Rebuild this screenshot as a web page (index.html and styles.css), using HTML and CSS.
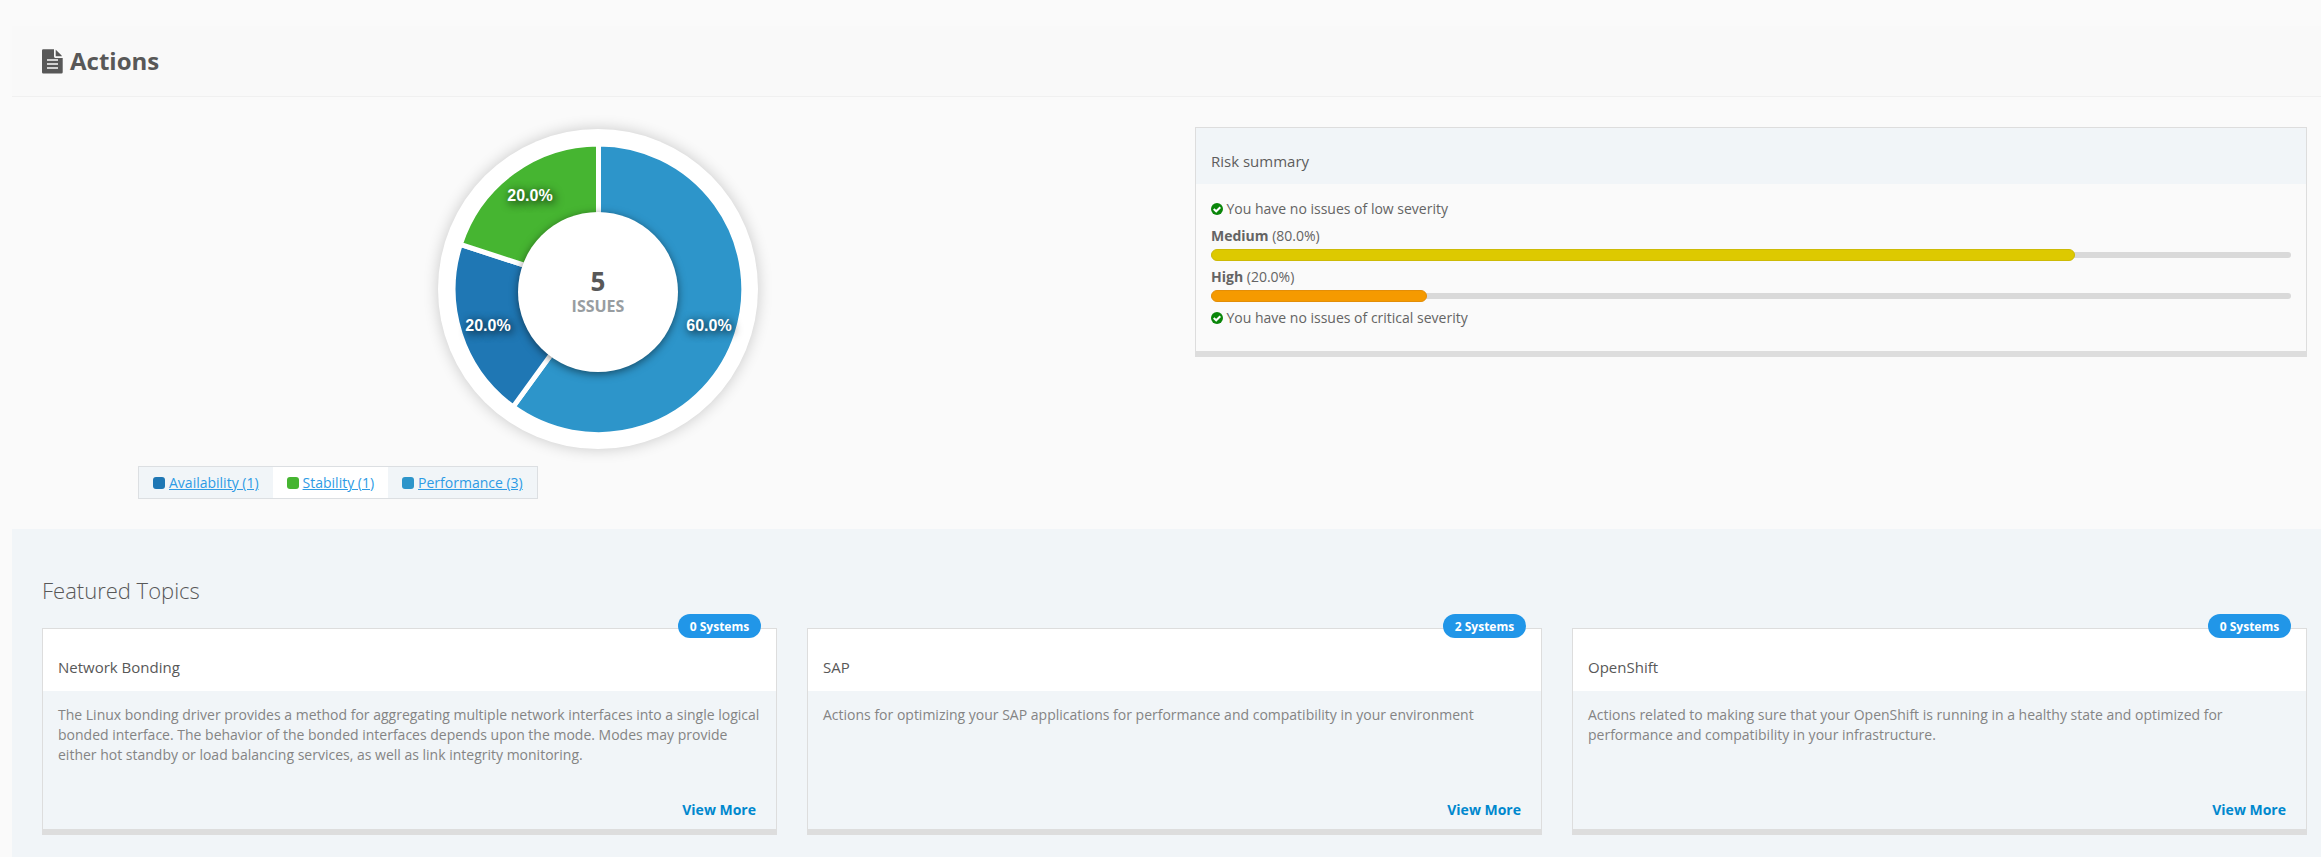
FILE: index.html
```html
<!DOCTYPE html>
<html lang="en">
<head>
<meta charset="utf-8">
<title>Actions</title>
<link rel="stylesheet" href="styles.css">
</head>
<body>
<div class="page">
  <header class="page-header">
    <svg class="page-icon" viewBox="0 0 21 25" width="21" height="25"><path d="M1.3 0.3H12V7.6a1.3 1.3 0 0 0 1.3 1.3H20.7V23.2a1.3 1.3 0 0 1-1.3 1.3H1.3A1.3 1.3 0 0 1 0 23.200V1.600A1.300 1.300 0 0 1 1.300 .3ZM13.700 .8a2 2 0 0 1 .6.400L19.400 6.300a2 2 0 0 1 .5.900H13.700Z"/><path class="page-icon-lines" d="M5 11H16M5 15H16M5 19H16"/></svg>
    <h1 class="page-title">Actions</h1>
  </header>

  <section class="overview">
    <div class="chart-col">
      <svg class="donut" viewBox="0 0 320 320" width="320" height="320">
        <g class="slices">
          <path fill="#2d95ca" d="M160.500 160.300V15A145.300 145.300 0 1 1 75.100 277.850Z"/>
          <path fill="#1f77b4" d="M160.500 160.300L75.100 277.850A145.300 145.300 0 0 1 22.300 115.400Z"/>
          <path fill="#46b531" d="M160.500 160.300L22.300 115.400A145.300 145.300 0 0 1 160.500 15Z"/>
        </g>
        <circle class="hole" cx="160" cy="163" r="80"/>
        <text class="slice-label" x="92" y="72">20.0%</text>
        <text class="slice-label" x="50" y="202">20.0%</text>
        <text class="slice-label" x="271" y="202">60.0%</text>
        <text class="total" x="160" y="162">5</text>
        <text class="total-label" x="160" y="183">ISSUES</text>
      </svg>
      <div class="legend">
        <span class="legend-item"><i class="swatch availability"></i><a href="#">Availability (1)</a></span>
        <span class="legend-item"><i class="swatch stability"></i><a href="#">Stability (1)</a></span>
        <span class="legend-item"><i class="swatch performance"></i><a href="#">Performance (3)</a></span>
      </div>
    </div>

    <div class="risk">
      <h2 class="risk-title">Risk summary</h2>
      <div class="risk-body">
        <div class="risk-clear"><svg class="check" viewBox="0 0 12 12" width="12" height="12"><circle cx="6" cy="6" r="6"/><path d="M2.700 6L5.200 8.300L9.300 4.200"/></svg>You have no issues of low severity</div>
        <div class="risk-row">
          <div><b>Medium</b> (80.0%)</div>
          <div class="bar"><div class="fill medium" style="width:80%"></div></div>
        </div>
        <div class="risk-row">
          <div><b>High</b> (20.0%)</div>
          <div class="bar"><div class="fill high" style="width:20%"></div></div>
        </div>
        <div class="risk-clear"><svg class="check" viewBox="0 0 12 12" width="12" height="12"><circle cx="6" cy="6" r="6"/><path d="M2.700 6L5.200 8.300L9.300 4.200"/></svg>You have no issues of critical severity</div>
      </div>
    </div>
  </section>

  <section class="topics">
    <h2 class="topics-title">Featured Topics</h2>
    <div class="cards">
      <article class="card">
        <span class="badge">0 Systems</span>
        <h3 class="card-title">Network Bonding</h3>
        <p class="card-text">The Linux bonding driver provides a method for aggregating multiple network interfaces into a single logical bonded interface. The behavior of the bonded interfaces depends upon the mode. Modes may provide either hot standby or load balancing services, as well as link integrity monitoring.</p>
        <a class="more" href="#">View More</a>
      </article>
      <article class="card">
        <span class="badge">2 Systems</span>
        <h3 class="card-title">SAP</h3>
        <p class="card-text">Actions for optimizing your SAP applications for performance and compatibility in your environment</p>
        <a class="more" href="#">View More</a>
      </article>
      <article class="card">
        <span class="badge">0 Systems</span>
        <h3 class="card-title">OpenShift</h3>
        <p class="card-text">Actions related to making sure that your OpenShift is running in a healthy state and optimized for performance and compatibility in your infrastructure.</p>
        <a class="more" href="#">View More</a>
      </article>
    </div>
  </section>
</div>
</body>
</html>
```

FILE: styles.css
```css
* { box-sizing: border-box; }
body {
  margin: 0;
  height: 857px;
  overflow: hidden;
  background: #fafafa;
  color: #646464;
  font: 14px/20px "Open Sans", sans-serif;
}
h1, h2, h3, p { margin: 0; }
.page { padding: 26px 0 0 12px; }

.page-header {
  display: flex;
  align-items: center;
  gap: 7px;
  height: 71px;
  padding: 0 30px;
  background: #f9f9f9;
  border-bottom: 1px solid #f0f0f0;
}
.page-icon { fill: #585858; }
.page-icon-lines { stroke: #f9f9f9; stroke-width: 1.7; fill: none; }
.page-title { font-size: 24px; line-height: 34px; font-weight: 700; color: #585858; }

.overview {
  display: grid;
  grid-template-columns: 1fr 1fr;
  gap: 41px;
  height: 432px;
  padding: 30px 14px 0 30px;
}
.chart-col {
  display: flex;
  flex-direction: column;
  align-items: flex-start;
  padding-top: 2px;
}
.donut {
  display: block;
  align-self: center;
  flex: none;
  border-radius: 50%;
  background: #fff;
  box-shadow: 0 0 15px rgba(0, 0, 0, .2);
}
.slices path { stroke: #fff; stroke-width: 5; }
.hole { fill: #fff; filter: drop-shadow(0 2px 4px rgba(0, 0, 0, .5)); }
.slice-label {
  font: 700 16px "Liberation Sans", Arial, sans-serif;
  fill: #fff;
  text-anchor: middle;
  text-shadow: 2px 2px 10px #000;
}
.total { font-size: 26px; font-weight: 700; fill: #585858; text-anchor: middle; }
.total-label { font-size: 16px; font-weight: 700; fill: #989da1; text-anchor: middle; }

.legend {
  display: flex;
  margin: 17px 0 0 96px;
  height: 33px;
  border: 1px solid #dcdfe2;
}
.legend-item {
  display: flex;
  align-items: center;
  gap: 4px;
  padding: 0 14px;
  background: #f1f5f8;
}
.legend-item:nth-child(2) { background: #fff; }
.legend a { color: #2d9be5; }
.swatch { width: 12px; height: 12px; border-radius: 3px; }
.availability { background: #1f77b4; }
.stability { background: #46b531; }
.performance { background: #2d95ca; }

.risk {
  align-self: start;
  height: 230px;
  border: 1px solid #ddd;
  border-bottom-width: 6px;
}
.risk-title {
  height: 56px;
  padding: 23px 15px 0;
  background: #f1f5f8;
  font-size: 15px;
  line-height: 20px;
  font-weight: 400;
  color: #5d5d5d;
}
.risk-body {
  display: flex;
  flex-direction: column;
  gap: 6px;
  padding: 15px 15px 0;
}
.risk-clear { display: flex; align-items: center; gap: 4px; margin-left: -0.5px; }
.risk-clear + .risk-row { margin-top: 1px; }
.check { flex: none; fill: #0a860a; }
.check path { fill: none; stroke: #fff; stroke-width: 2; }
.bar {
  position: relative;
  height: 12px;
  margin-top: 3px;
}
.bar::before {
  content: "";
  position: absolute;
  inset: 3px 0;
  border-radius: 3px;
  background: #d9d9d9;
}
.fill { position: relative; height: 12px; border-radius: 6px; }
.medium { background: #ddc900; border: 1px solid #cdba05; }
.high { background: #f59a00; border: 1px solid #e38e08; }

.topics {
  height: 328px;
  padding: 46px 14px 0 30px;
  background: #f1f5f8;
}
.topics-title {
  margin-bottom: 23px;
  font-size: 22px;
  line-height: 30px;
  font-weight: 300;
  color: #585858;
}
.cards { display: grid; grid-template-columns: repeat(3, 1fr); gap: 30px; }
.card {
  position: relative;
  display: flex;
  flex-direction: column;
  height: 207px;
  border: 1px solid #ddd;
  border-bottom-width: 6px;
}
.badge {
  position: absolute;
  top: -15px;
  right: 15px;
  width: 83px;
  height: 24px;
  border-radius: 12px;
  background: #2196e8;
  color: #fff;
  font-size: 12px;
  line-height: 25px;
  font-weight: 700;
  text-align: center;
}
.card-title {
  height: 62px;
  padding: 28px 15px 0;
  background: #fff;
  font-size: 15px;
  line-height: 20px;
  font-weight: 400;
  color: #585858;
}
.card-text { padding: 14px 15px 0; color: #848484; }
.more {
  margin: auto 20px 9px;
  align-self: flex-end;
  color: #0088ce;
  font-weight: 700;
  text-decoration: none;
}
```
